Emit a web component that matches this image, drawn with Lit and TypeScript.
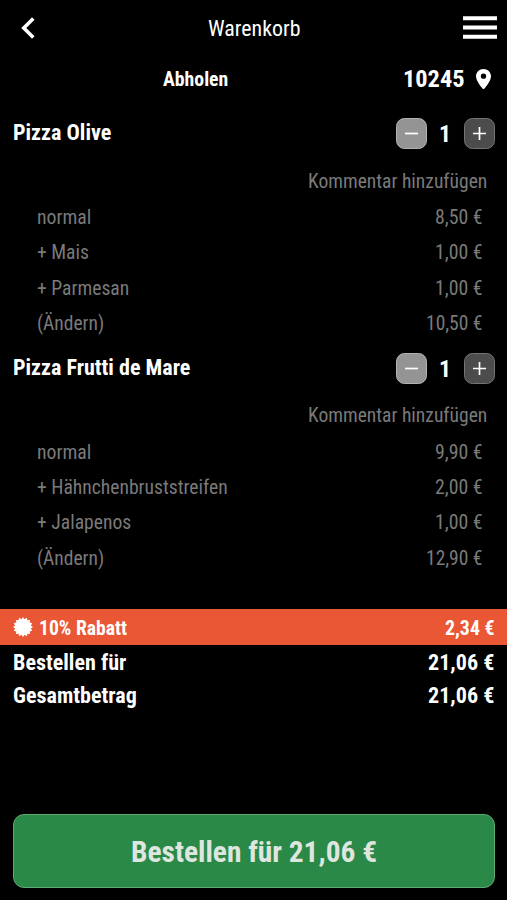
import { LitElement, html, css, svg } from "lit";
import { customElement, property } from "lit/decorators.js";

/** Condensed label: its glyphs are fitted to a fixed advance width. */
@customElement("fit-label")
class FitLabel extends LitElement {
  @property() text = "";
  @property({ type: Number }) width = 0;
  @property({ type: Number }) size = 20;
  @property({ type: Boolean }) bold = false;

  static styles = css`
    :host { display: block; flex: none; }
    svg { display: block; overflow: visible; }
    text {
      font-family: "Roboto Condensed", Roboto, "Liberation Sans", sans-serif;
      font-stretch: 75%;
      font-weight: 400;
      fill: currentColor;
    }
    .bold { font-weight: 700; }
  `;

  render() {
    return html`<svg width=${this.width} height=${this.size}>
      ${svg`<text class=${this.bold ? "bold" : ""} x="0" y=${this.size * 0.866}
        font-size=${this.size} textLength=${this.width}
        lengthAdjust="spacingAndGlyphs">${this.text}</text>`}
    </svg>`;
  }
}

const label = (text: string, width: number, size: number, bold = false) =>
  html`<fit-label .text=${text} .width=${width} .size=${size} .bold=${bold}></fit-label>`;

type Line = [string, number, string, number];
interface Item { name: string; width: number; lines: Line[]; }

const items: Item[] = [
  {
    name: "Pizza Olive", width: 98.3,
    lines: [
      ["normal", 54.3, "8,50 €", 47.5],
      ["+ Mais", 52, "1,00 €", 47.5],
      ["+ Parmesan", 92.3, "1,00 €", 47.5],
      ["(Ändern)", 67.2, "10,50 €", 56.5],
    ],
  },
  {
    name: "Pizza Frutti de Mare", width: 177.3,
    lines: [
      ["normal", 54.3, "9,90 €", 47.5],
      ["+ Hähnchenbruststreifen", 190.7, "2,00 €", 47.5],
      ["+ Jalapenos", 94.3, "1,00 €", 47.5],
      ["(Ändern)", 67.2, "12,90 €", 56.5],
    ],
  },
];

const burst = Array.from({ length: 32 }, (_, i) => {
  const r = i % 2 ? 8 : 10;
  const a = (i * Math.PI) / 16;
  return `${(10 + r * Math.sin(a)).toFixed(2)},${(10 - r * Math.cos(a)).toFixed(2)}`;
}).join(" ");

@customElement("app-root")
class AppRoot extends LitElement {
  static styles = css`
    :host {
      display: block;
      box-sizing: border-box;
      height: 900px;
      background: #000;
      color: #fff;
      overflow: hidden;
    }
    svg { display: block; flex: none; }
    .header {
      display: grid;
      grid-template-columns: 1fr auto 1fr;
      align-items: center;
      box-sizing: border-box;
      height: 54.6px;
      padding: 1.4px 10px 0 20.5px;
    }
    .menu { justify-self: end; }
    .title { padding: 0 10px 0.8px 0; }
    .place {
      display: grid;
      grid-template-columns: 163.3px auto 1fr;
      align-items: center;
      box-sizing: border-box;
      height: 51.6px;
      padding: 0 16.5px 3.2px 0;
    }
    .zip {
      display: flex;
      align-items: center;
      justify-content: flex-end;
      gap: 11px;
    }
    .code { padding-bottom: 1.2px; }
    .head {
      display: flex;
      align-items: center;
      justify-content: space-between;
      height: 55.6px;
      padding: 0 12.3px 0 12.5px;
    }
    .name { padding-bottom: 4.2px; }
    .qty { display: flex; align-items: center; }
    .count {
      box-sizing: border-box;
      width: 37px;
      display: flex;
      justify-content: center;
      padding-bottom: 1.8px;
    }
    .step {
      box-sizing: border-box;
      width: 31px;
      height: 31px;
      border-radius: 8.5px;
      display: grid;
      place-items: center;
      border: 1px solid #b4b4b4;
      background: #949494;
    }
    .plus { border-color: #757575; background: #4c4c4c; }
    .comment {
      display: flex;
      align-items: center;
      justify-content: flex-end;
      height: 37.5px;
      padding-right: 19.3px;
      color: #7a7a7a;
    }
    .line {
      display: flex;
      align-items: center;
      justify-content: space-between;
      height: 35.4px;
      padding: 0 24.5px 0 37.4px;
      color: #7a7a7a;
    }
    .discount {
      display: flex;
      align-items: center;
      justify-content: space-between;
      height: 36px;
      margin-top: 33.9px;
      padding: 0 12.3px 0 13px;
      background: #ea5735;
    }
    .tag { display: flex; align-items: center; gap: 6px; }
    .total {
      display: flex;
      align-items: center;
      justify-content: space-between;
      height: 33px;
      padding: 0 12.3px 0 12.5px;
    }
    .order {
      box-sizing: border-box;
      display: flex;
      align-items: center;
      justify-content: center;
      height: 73.5px;
      margin: 103px 12px 0 13px;
      padding-bottom: 0.6px;
      border: 1px solid #60a874;
      border-radius: 11px;
      background: #2a8947;
      color: #dfe5df;
    }
  `;

  private renderItem(item: Item) {
    return html`
      <div class="head">
        <div class="name">${label(item.name, item.width, 22, true)}</div>
        <div class="qty">
          <div class="step">
            <svg width="15" height="15"><path d="M1 7.5H14" stroke="#fff" stroke-width="1.7" /></svg>
          </div>
          <div class="count">${label("1", 12, 24, true)}</div>
          <div class="step plus">
            <svg width="15" height="15"><path d="M1 7.5H14M7.5 1V14" stroke="#fff" stroke-width="1.7" /></svg>
          </div>
        </div>
      </div>
      <div class="comment">${label("Kommentar hinzufügen", 179.3, 20)}</div>
      ${item.lines.map(
        ([name, nameWidth, price, priceWidth]) => html`<div class="line">
          ${label(name, nameWidth, 20)}${label(price, priceWidth, 20)}
        </div>`
      )}
    `;
  }

  render() {
    return html`
      <div class="header">
        <svg width="15" height="22" viewBox="0 0 15 22">
          <path d="M12.3 1.5L2.8 11L12.3 20.5" fill="none" stroke="#fff" stroke-width="3.6" />
        </svg>
        <div class="title">${label("Warenkorb", 92.5, 22)}</div>
        <svg class="menu" width="34" height="23">
          <path d="M0 2.3H34M0 11.5H34M0 20.7H34" stroke="#fff" stroke-width="3.9" />
        </svg>
      </div>
      <div class="place">
        <div></div>
        <div>${label("Abholen", 65.3, 19.5, true)}</div>
        <div class="zip">
          <div class="code">${label("10245", 61.5, 24.4, true)}</div>
          <svg width="15" height="20.5" viewBox="5 2 14 20" preserveAspectRatio="none">
            <path fill="#fff" d="M12 2C8.13 2 5 5.13 5 9c0 5.25 7 13 7 13s7-7.75 7-13c0-3.87-3.13-7-7-7zm0 9.5a2.5 2.5 0 1 1 0-5 2.5 2.5 0 0 1 0 5z" />
          </svg>
        </div>
      </div>
      ${items.map((item) => this.renderItem(item))}
      <div class="discount">
        <div class="tag">
          <svg width="20" height="20"><polygon fill="#fff" points=${burst} /></svg>
          ${label("10% Rabatt", 88, 19.5, true)}
        </div>
        ${label("2,34 €", 49.5, 19.5, true)}
      </div>
      <div class="total">${label("Bestellen für", 113.3, 22, true)}${label("21,06 €", 66.3, 22, true)}</div>
      <div class="total">${label("Gesamtbetrag", 123.8, 22, true)}${label("21,06 €", 66.3, 22, true)}</div>
      <div class="order">${label("Bestellen für 21,06 €", 246, 29.5, true)}</div>
    `;
  }
}
